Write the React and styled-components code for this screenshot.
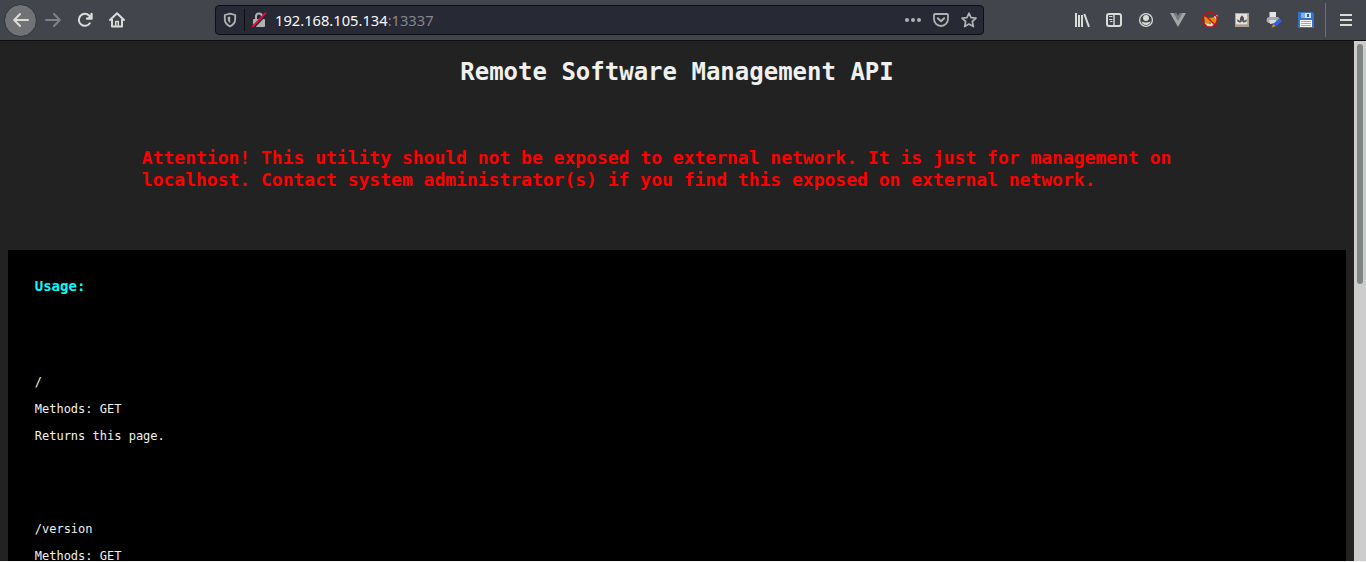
import React from "react";
import styled, { createGlobalStyle } from "styled-components";

const GlobalStyle = createGlobalStyle`
  * { box-sizing: border-box; }
  html, body { margin: 0; background: #fff; overflow: hidden; }
`;

const Browser = styled.div`
  display: flex;
  flex-direction: column;
  width: 1366px;
  height: 562px;
  overflow: hidden;
  background: #222;
  border-bottom: 1px solid #f4f4f4;
`;

const Toolbar = styled.header`
  display: flex;
  align-items: center;
  flex: none;
  height: 41px;
  background: #42454c;
  border-bottom: 1px solid #0d0e10;
  padding-left: 4px;
`;

const NavButton = styled.span`
  display: flex;
  align-items: center;
  justify-content: center;
  width: 32px;
  height: 32px;
  opacity: ${(p) => (p.$dim ? 0.4 : 1)};
`;

const BackButton = styled(NavButton)`
  width: 33px;
  height: 33px;
  background: #707276;
  border: 1px solid #303238;
  border-radius: 50%;
`;

const UrlBar = styled.div`
  display: flex;
  align-items: center;
  width: 769px;
  height: 30px;
  margin-left: 82px;
  padding: 0 0 0 7px;
  background: #272935;
  border: 1px solid #0e0f14;
  border-radius: 4px;
`;

const ShieldSlot = styled.span`
  display: flex;
  width: 16px;
`;

const Divider = styled.i`
  width: 1px;
  height: 22px;
  margin: 0 6px 0 5px;
  background: #0d0e12;
`;

const Url = styled.span`
  flex: 1;
  margin-left: 8px;
  font: 14.7px/20px "Noto Sans", sans-serif;
  color: #f9f9fa;
`;

const Port = styled.span`
  color: #85868c;
`;

const UrlAction = styled.span`
  display: flex;
  justify-content: center;
  width: 28px;
`;

const Extensions = styled.div`
  display: flex;
  align-items: center;
  margin-left: 82px;
`;

const ToolButton = styled.span`
  display: flex;
  justify-content: center;
  width: 32px;
`;

const MenuButton = styled.span`
  display: flex;
  align-items: center;
  justify-content: flex-end;
  width: 30px;
  height: 34px;
  margin-left: 3px;
  border-left: 1px solid #6c6e73;
`;

const Viewport = styled.div`
  display: flex;
  flex: 1;
  min-height: 0;
`;

const Page = styled.main`
  flex: 1;
  padding: 0 8px;
  overflow: hidden;
  background: #222;
  color: #f0f0ee;
  font-family: "DejaVu Sans Mono", monospace;
`;

const Title = styled.h1`
  margin: 17px 0 0;
  font-size: 24px;
  line-height: 28px;
  text-align: center;
`;

const Warning = styled.h2`
  width: 1070.4px;
  margin: 61px auto 0;
  font-size: 18px;
  line-height: 22px;
  color: #f00;
`;

const Usage = styled.section`
  height: 420px;
  margin-top: 59px;
  padding: 28px 26.76px;
  background: #000;
`;

const UsageTitle = styled.h3`
  margin: 0 0 81px;
  font-size: 14px;
  line-height: 16px;
  color: #0ff;
`;

const Endpoint = styled.div`
  display: flex;
  flex-direction: column;
  gap: 13px;
  margin-bottom: 79px;
`;

const Line = styled.p`
  margin: 0;
  font-size: 12px;
  line-height: 14px;
`;

const ScrollTrack = styled.div`
  width: 12px;
  padding: 3px 2px;
  background: #cdcdcd;
  border-left: 1px solid #d5cec8;
`;

const ScrollThumb = styled.div`
  width: 6px;
  height: 240px;
  background: #7f8485;
  border-radius: 3px;
`;

const Icon = ({ color = "#dadbd7", children, ...rest }) => (
  <svg width="16" height="16" viewBox="0 0 16 16" fill="none" stroke={color} strokeWidth="2" strokeLinecap="round" strokeLinejoin="round" {...rest}>
    {children}
  </svg>
);

const ArrowLeft = () => (
  <Icon><path d="M15 8H1.5M7 2L1.2 8L7 14" /></Icon>
);
const ArrowRight = () => (
  <Icon><path d="M1 8H14.5M9 2L14.8 8L9 14" /></Icon>
);
const Reload = () => (
  <Icon>
    <path d="M12.8 11.3A6 6 0 1 1 12.3 3.8" />
    <path d="M15.5 1V7.5H9Z" fill="#dadbd7" stroke="none" />
    <path d="M14.4 1.8V6.4H9.8" />
  </Icon>
);
const Home = () => (
  <Icon>
    <path d="M1 8L8 1.2L15 8M3 7.5V14.5H13V7.5" />
    <path d="M6.7 14V9.5H9.3V14" strokeWidth="1.5" />
  </Icon>
);
const Shield = () => (
  <Icon color="#b0b1b3" width="14" height="16" viewBox="0 0 14 16">
    <path d="M7 1.6L12.2 3V7C12.2 10.5 10 13 7 14.3C4 13 1.8 10.5 1.8 7V3Z" strokeWidth="1.8" />
    <path d="M7.2 4.5V11.3C5.4 10 4.7 8.4 4.7 7V5Z" fill="#b0b1b3" stroke="none" />
  </Icon>
);
const InsecureLock = () => (
  <Icon color="#b0b1b3">
    <path d="M5 7V4.5A3 3 0 0 1 11 4.5V7" />
    <rect x="2" y="7" width="12" height="8" rx="1" fill="#b0b1b3" stroke="none" />
    <path d="M2.5 15.8L15.5 2.2" stroke="#272935" strokeWidth="2" />
    <path d="M1.8 14.2L14.5 1.2" stroke="#ff0039" strokeWidth="1.8" />
  </Icon>
);
const Dots = () => (
  <Icon stroke="none" fill="#b0b1b3">
    <circle cx="2" cy="8" r="2" /><circle cx="8" cy="8" r="2" /><circle cx="14" cy="8" r="2" />
  </Icon>
);
const Pocket = () => (
  <Icon color="#b0b1b3">
    <path d="M2 2H14Q15 2 15 3V7A7 7 0 0 1 1 7V3Q1 2 2 2Z" strokeWidth="1.8" />
    <path d="M4.8 6.2L8 9.3L11.2 6.2" />
  </Icon>
);
const Star = () => (
  <Icon color="#b0b1b3">
    <path d="M8 1.2L10 5.7L15 6.2L11.3 9.5L12.4 14.6L8 12L3.6 14.6L4.7 9.5L1 6.2L6 5.7Z" strokeWidth="1.7" />
  </Icon>
);
const Library = () => (
  <Icon strokeLinecap="butt">
    <path d="M2 1V15M5 3V15M8 3V15M10.3 2L15 14.8" />
  </Icon>
);
const Sidebar = () => (
  <Icon>
    <rect x="1" y="2" width="14" height="12" rx="2" />
    <path d="M8 2V14" strokeWidth="1.4" />
    <path d="M3.5 4.5H6M3.5 7.5H6M4.5 9.5H6" strokeWidth="1" />
  </Icon>
);
const Account = () => (
  <Icon>
    <circle cx="8" cy="8" r="6.4" strokeWidth="1.3" />
    <circle cx="8" cy="6" r="3" fill="#dadbd7" stroke="none" />
    <path d="M3.5 9.5Q8 11.5 12.5 9.5Q11.5 13 8 13Q4.5 13 3.5 9.5Z" fill="#dadbd7" stroke="none" />
  </Icon>
);
const VueMark = () => (
  <Icon stroke="none">
    <path d="M0 1H4L8 8L12 1H16L8 15Z" fill="#a3a5a6" />
    <path d="M3.5 1H6.4L8 3.8L9.6 1H12.5L8 9Z" fill="#75797d" />
  </Icon>
);
const FoxBlocked = () => (
  <Icon stroke="none">
    <path d="M2 4L6 6L11 5.5L14 4L14.5 9L12 13L8 14L3 12Z" fill="#e38a17" />
    <path d="M12 4.5L15.5 2.5L15 7.5L13.5 7ZM3 10.5L6 12L8.5 10.5L12 11.5L10 14.5L5 14.2Z" fill="#ddd3c9" />
    <path d="M6.5 11L9 10.5L8.5 12Z" fill="#71451d" />
    <circle cx="8" cy="8" r="7.3" stroke="#d40b0b" strokeWidth="1.3" />
    <path d="M3 3L13 13" stroke="#d40b0b" strokeWidth="1.3" />
  </Icon>
);
const Spy = () => (
  <Icon stroke="none" width="14" height="14">
    <rect width="16" height="16" fill="#a99d94" />
    <rect x="1" y="1" width="13" height="12" fill="#e6e0d9" />
    <path d="M8 2.5L10 5L10.5 8H5.5L6 5Z" fill="#4c4d52" />
    <path d="M2 7L5 8.5L8 7.5L11 8.5L14 7L13 10L10 11L8 9.5L6 11L3 10Z" fill="#5a5a5e" />
  </Icon>
);
const PrinterPen = () => (
  <Icon stroke="none">
    <rect x="3.5" y="0" width="6.5" height="6" fill="#e4e4e4" />
    <path d="M1 6L3 5H12L14 7V11H2L.5 9Z" fill="#a9aaa9" />
    <path d="M3 8H10V11L4 12Z" fill="#dedfdd" />
    <path d="M13 6.5L16 9L10 14.5L7.2 12Z" fill="#2f62eb" />
    <path d="M7.2 12L9.5 14.3L5.5 15.8Z" fill="#c49a2a" />
  </Icon>
);
const Floppy = () => (
  <Icon stroke="none">
    <path d="M0 0H14.5L16 1.5V16H0Z" fill="#3970c8" />
    <rect x="3" y="1" width="10" height="5" fill="#d9e4f0" />
    <rect x="3" y="1" width="4" height="5" fill="#82b1dc" />
    <rect x="9" y="2" width="2" height="3" fill="#2b5fb0" />
    <rect x="2" y="8" width="12" height="7" fill="#fbfbf8" />
    <path d="M3 9.5H13M3 11.5H13M3 13.5H13" stroke="#a6a6a2" strokeWidth="1" strokeLinecap="butt" />
  </Icon>
);
const Hamburger = () => (
  <Icon strokeLinecap="butt" viewBox="1 0 16 16"><path d="M2 3H14M2 8H14M2 13H14" /></Icon>
);

const extensionIcons = [Library, Sidebar, Account, VueMark, FoxBlocked, Spy, PrinterPen, Floppy];

const endpoints = [
  ["/", "Methods: GET", "Returns this page."],
  ["/version", "Methods: GET"],
];

export default function App() {
  return (
    <>
      <GlobalStyle />
      <Browser>
        <Toolbar>
          <BackButton><ArrowLeft /></BackButton>
          <NavButton $dim><ArrowRight /></NavButton>
          <NavButton><Reload /></NavButton>
          <NavButton><Home /></NavButton>
          <UrlBar>
            <ShieldSlot><Shield /></ShieldSlot>
            <Divider />
            <InsecureLock />
            <Url>192.168.105.134<Port>:13337</Port></Url>
            <UrlAction><Dots /></UrlAction>
            <UrlAction><Pocket /></UrlAction>
            <UrlAction><Star /></UrlAction>
          </UrlBar>
          <Extensions>
            {extensionIcons.map((Glyph, i) => (
              <ToolButton key={i}><Glyph /></ToolButton>
            ))}
          </Extensions>
          <MenuButton><Hamburger /></MenuButton>
        </Toolbar>
        <Viewport>
          <Page>
            <Title>Remote Software Management API</Title>
            <Warning>
              Attention! This utility should not be exposed to external network. It is just for management on
              localhost. Contact system administrator(s) if you find this exposed on external network.
            </Warning>
            <Usage>
              <UsageTitle>Usage:</UsageTitle>
              {endpoints.map((lines) => (
                <Endpoint key={lines[0]}>
                  {lines.map((line) => <Line key={line}>{line}</Line>)}
                </Endpoint>
              ))}
            </Usage>
          </Page>
          <ScrollTrack><ScrollThumb /></ScrollTrack>
        </Viewport>
      </Browser>
    </>
  );
}
